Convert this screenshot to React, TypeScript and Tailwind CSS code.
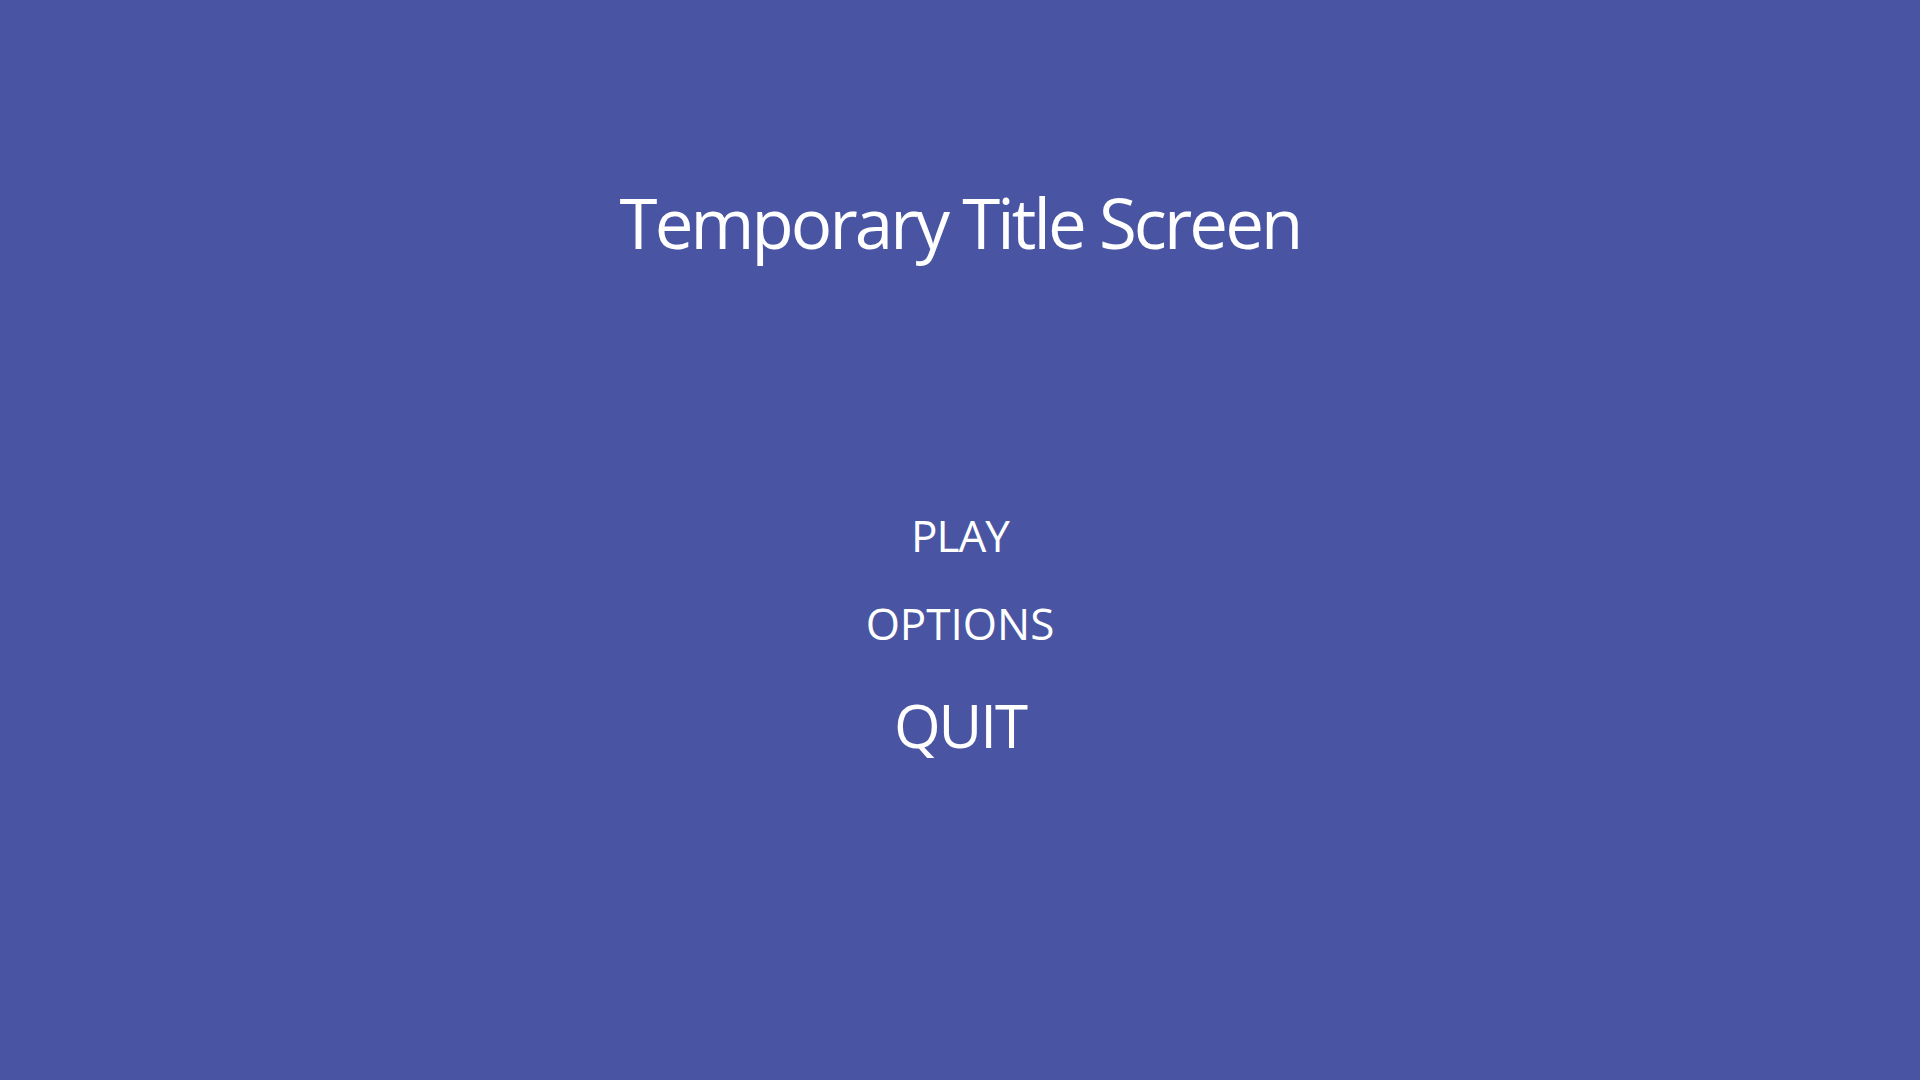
const menu = [
  { label: "PLAY", cls: "mt-[256px] text-[44px] tracking-[-1px]" },
  { label: "OPTIONS", cls: "mt-[44px] text-[44px]" },
  { label: "QUIT", cls: "mt-[50px] text-[60px] tracking-[-2px]" },
];

export default function App() {
  return (
    <div className="min-h-screen w-full bg-[#4955a3] text-white flex flex-col items-center font-['Open_Sans',sans-serif]">
      <h1 className="pt-[188px] text-[69px] leading-none font-normal tracking-[-2.9px]">Temporary Title Screen</h1>
      <nav className="flex flex-col items-center">
        {menu.map((m) => (
          <button key={m.label} className={`${m.cls} leading-none cursor-pointer`}>
            {m.label}
          </button>
        ))}
      </nav>
    </div>
  );
}
